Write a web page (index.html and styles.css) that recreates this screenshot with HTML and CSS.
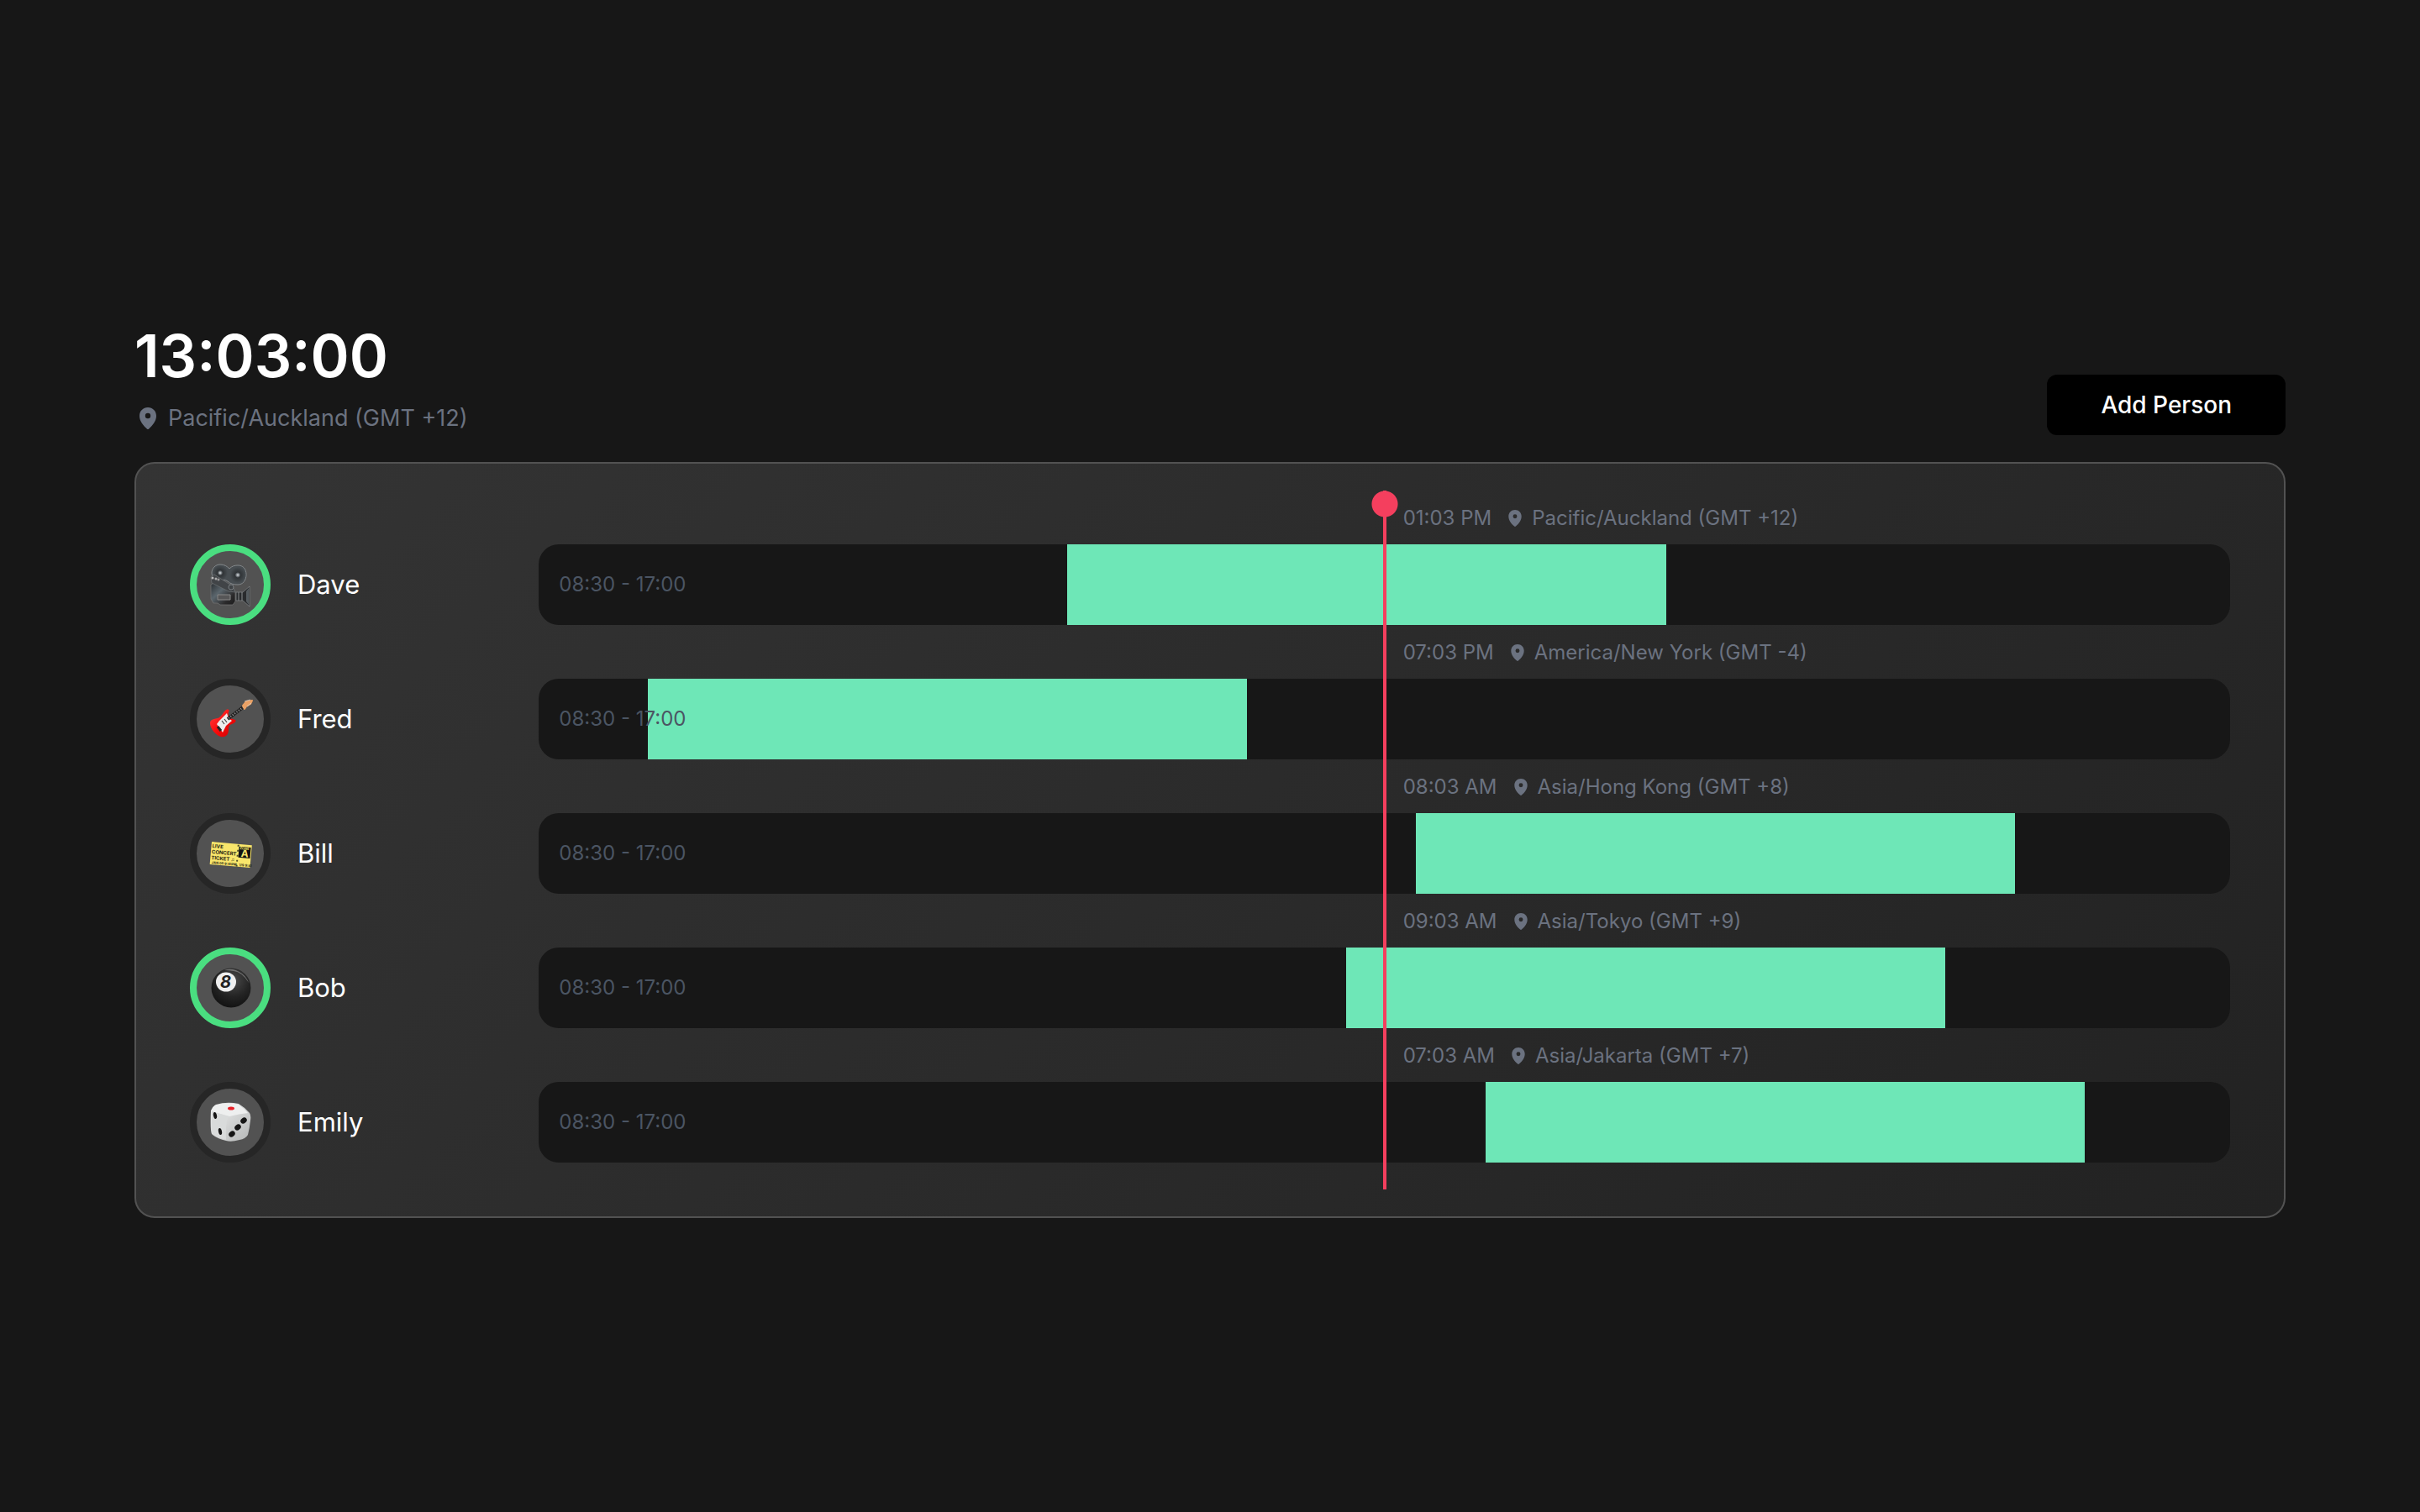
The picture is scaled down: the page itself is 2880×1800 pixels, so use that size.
FILE: index.html
```html
<!DOCTYPE html>
<html lang="en">
<head>
<meta charset="utf-8">
<title>Team time zones</title>
<link rel="stylesheet" href="styles.css">
</head>
<body>
<svg class="defs" aria-hidden="true">
  <defs>
    <symbol id="pin" viewBox="0 0 20 26"><path fill-rule="evenodd" d="M10 0C4.300 0 0 4.400 0 10c0 7 5.400 12 8.800 15.500q1.200 1 2.400 0C14.600 22 20 17 20 10 20 4.400 15.700 0 10 0zm0 6.800a3.200 3.200 0 1 1 0 6.400 3.200 3.200 0 0 1 0-6.400z"/></symbol>
    <linearGradient id="cam" x1="0" y1="0" x2="1" y2="1"><stop offset="0" stop-color="#25292c"/><stop offset=".4" stop-color="#5b666d"/><stop offset=".75" stop-color="#2b2a2b"/><stop offset="1" stop-color="#1b1b1c"/></linearGradient>
    <radialGradient id="reel"><stop offset="0" stop-color="#dfe3e5"/><stop offset=".2" stop-color="#777d82"/><stop offset=".35" stop-color="#2f3336"/><stop offset="1" stop-color="#474d51"/></radialGradient>
    <radialGradient id="ball" cx=".55" cy=".3" r=".7"><stop offset="0" stop-color="#4a4a4a"/><stop offset=".6" stop-color="#242424"/><stop offset="1" stop-color="#131313"/></radialGradient>
    <linearGradient id="body" x1="0" y1="0" x2="1" y2="1"><stop offset="0" stop-color="#ff4444"/><stop offset=".5" stop-color="#f90d0d"/><stop offset="1" stop-color="#c80000"/></linearGradient>
    <linearGradient id="die" x1="0" y1="0" x2="1" y2="1"><stop offset="0" stop-color="#f1f2f2"/><stop offset="1" stop-color="#b4b6b6"/></linearGradient>
  </defs>
</svg>
<main class="page">
  <header class="header">
    <div>
      <h1 class="clock">13:03:00</h1>
      <p class="zone"><svg class="pin"><use href="#pin"/></svg>Pacific/Auckland (GMT +12)</p>
    </div>
    <button class="add" type="button">Add Person</button>
  </header>
  <section class="panel">
    <article class="row">
      <div class="person">
        <span class="avatar available"><svg class="emoji" viewBox="0 0 48 48">
          <path d="M1 24l7-4 20 9 2 3v12l-3 4H12l-3-2H4L1 41z" fill="url(#cam)" stroke="#777" stroke-width=".7"/>
          <path d="M12 0c5 0 8 2 11 5 3-3 6-4 10-4 6 0 10 4 10 11s-4 12-10 12c-5 0-9-1-12-4-3-2-6-2-9-1C6 18 2 15 2 10S6 0 12 0z" fill="#474d51" stroke="#83888b"/>
          <circle cx="12" cy="10" r="9" fill="url(#reel)"/><circle cx="33" cy="12.500" r="9.500" fill="url(#reel)"/>
          <path d="M1 15l4-3 22 14 3 7-8-1L2 22z" fill="#414447" stroke="#6e7376" stroke-width=".7"/>
          <circle cx="3" cy="16" r="1.500" fill="#bbb"/><circle cx="7" cy="17" r="1.500" fill="#aaa"/><circle cx="10" cy="18" r="1.500" fill="#999"/><circle cx="25" cy="27" r="3" fill="#3f4346" stroke="#7a7f82"/>
          <path d="M31 33h8l8-7v24l-8-7h-8z" fill="#292b2d" stroke="#84888b" stroke-width=".7"/><path d="M34 33v10M38 33v10" stroke="#8b8e90"/>
          <path d="M43 32v12l3 4V28z" fill="#555c60"/><path d="M9 36h15v6H9z" fill="#565657" stroke="#898989"/>
        </svg></span>
        <h2 class="name">Dave</h2>
      </div>
      <div class="day">
        <p class="local"><span>01:03 PM</span><svg class="pin small"><use href="#pin"/></svg>Pacific/Auckland (GMT +12)</p>
        <div class="track"><span class="hours" style="left:31.230%"></span><span class="range">08:30 - 17:00</span></div>
      </div>
    </article>
    <article class="row">
      <div class="person">
        <span class="avatar"><svg class="emoji" viewBox="0 0 48 48">
          <path d="M18 14c3-3 6-1 4 2-1 3 0 5 2 7l6 2c2 2-1 4-4 5-4 1-4 4-4 7 0 6-4 9-9 8C7 44 0 35 0 29c0-5 5-5 9-6s6-6 9-9z" fill="url(#body)"/>
          <path d="M20 17l-9 9-3 4 7 10 4-8 7-6-4-3z" fill="#ededed"/><path d="M9 33l4 5" stroke="#222" stroke-width="3"/>
          <path d="M14 26l3 4M17 24l3 4" stroke="#444" stroke-width="1.200"/>
          <path d="M21 24L43 7" stroke="#222" stroke-width="4"/><path d="M22 23L42 8" stroke="#a1a1a1" stroke-width="2" stroke-dasharray="1 2"/>
          <path d="M39 8l4-5 7-1-2 4-5 3-2 3z" fill="#eaa165" stroke="#eaa165" stroke-width="2" stroke-linejoin="round"/><path d="M41 3l7-2M44 9l5-4" stroke="#ddd" stroke-width=".7"/>
        </svg></span>
        <h2 class="name">Fred</h2>
      </div>
      <div class="day">
        <p class="local"><span>07:03 PM</span><svg class="pin small"><use href="#pin"/></svg>America/New York (GMT -4)</p>
        <div class="track"><span class="hours" style="left:6.450%"></span><span class="range">08:30 - 17:00</span></div>
      </div>
    </article>
    <article class="row">
      <div class="person">
        <span class="avatar"><svg class="emoji" viewBox="0 0 48 48">
          <g transform="translate(2 10) rotate(5)"><path d="M0 0h48v27H0z" fill="#f9e66b"/><path d="M33 3h14v13H33z" fill="#111"/><path d="M32 1v26" stroke="#55502a" stroke-width="2" stroke-dasharray="2 4"/>
          <g font-family="Inter, sans-serif" font-weight="700" fill="#252310"><text x="1" y="7" font-size="6">LIVE</text><text x="1" y="14" font-size="6">CONCERT</text><text x="1" y="21" font-size="6">TICKET ♫</text><text x="2" y="26" font-size="4">JAN 05 9:41PM</text><text x="35" y="26" font-size="4">1/9 9:41</text><text x="36" y="15" font-size="12" fill="#f9e66b">A</text><text x="34" y="6" font-size="4" fill="#f9e66b">ZONE</text></g></g>
        </svg></span>
        <h2 class="name">Bill</h2>
      </div>
      <div class="day">
        <p class="local"><span>08:03 AM</span><svg class="pin small"><use href="#pin"/></svg>Asia/Hong Kong (GMT +8)</p>
        <div class="track"><span class="hours" style="left:51.850%"></span><span class="range">08:30 - 17:00</span></div>
      </div>
    </article>
    <article class="row">
      <div class="person">
        <span class="avatar available"><svg class="emoji" viewBox="0 0 48 48">
          <circle cx="25" cy="24" r="23.500" fill="url(#ball)"/><path d="M17 3q10-4 21 4 6 5 8 11-8-13-18-14-6-1-11-1z" fill="#999" opacity=".6"/>
          <ellipse cx="19" cy="17" rx="12" ry="11.500" fill="#efefef"/><text x="12" y="24" font-family="Inter, sans-serif" font-size="20" font-weight="700" font-style="italic" fill="#222">8</text>
        </svg></span>
        <h2 class="name">Bob</h2>
      </div>
      <div class="day">
        <p class="local"><span>09:03 AM</span><svg class="pin small"><use href="#pin"/></svg>Asia/Tokyo (GMT +9)</p>
        <div class="track"><span class="hours" style="left:47.730%"></span><span class="range">08:30 - 17:00</span></div>
      </div>
    </article>
    <article class="row">
      <div class="person">
        <span class="avatar"><svg class="emoji" viewBox="0 0 48 48">
          <path d="M7 3Q20-1 34 2q7 4 13 11 2 3 1 9-1 9-3 17-3 5-10 6-10 3-16 1Q7 43 2 38 0 34 1 10q2-5 6-7z" fill="url(#die)"/>
          <path d="M6 4Q20 0 34 3q7 5 11 10-10 1-22 4Q11 15 3 10q0-4 3-6z" fill="#eeefef"/><path d="M23 17q-5 3-4 28Q8 42 2 37L2 11q10 3 21 6z" fill="#d9dbdb"/>
          <ellipse cx="25" cy="7.500" rx="4" ry="2" fill="#e72028"/>
          <g fill="#151515"><ellipse cx="6" cy="16" rx="2" ry="4" transform="rotate(-12 6 16)"/><ellipse cx="12" cy="35" rx="2" ry="4" transform="rotate(-12 12 35)"/><ellipse cx="40" cy="22" rx="4" ry="3.200" transform="rotate(-38 40 22)"/><ellipse cx="33" cy="30" rx="4" ry="3.200" transform="rotate(-38 33 30)"/><ellipse cx="26" cy="38" rx="4" ry="3.200" transform="rotate(-38 26 38)"/></g>
        </svg></span>
        <h2 class="name">Emily</h2>
      </div>
      <div class="day">
        <p class="local"><span>07:03 AM</span><svg class="pin small"><use href="#pin"/></svg>Asia/Jakarta (GMT +7)</p>
        <div class="track"><span class="hours" style="left:55.980%"></span><span class="range">08:30 - 17:00</span></div>
      </div>
    </article>
    <div class="overlay"><div class="needle"></div></div>
  </section>
</main>
</body>
</html>
```
FILE: styles.css
```css
* { box-sizing: border-box; }
body { margin: 0; background: #171717; color: #fff; font-family: Inter, "Liberation Sans", sans-serif; }
h1, h2, p { margin: 0; font-weight: 400; }
.defs { position: absolute; width: 0; height: 0; }
.page { min-height: 100vh; padding: 66px 160px 32px; display: flex; flex-direction: column; justify-content: center; gap: 32px; }
.header { display: flex; justify-content: space-between; align-items: flex-end; }
.clock { font-size: 70px; line-height: 80px; font-weight: 600; }
.zone { display: flex; align-items: center; gap: 14px; margin-top: 14px; padding-left: 6px; font-size: 27px; line-height: 40px; color: #6b7280; }
.pin { width: 20px; height: 26px; fill: currentColor; flex: none; }
.pin.small { width: 16px; height: 20px; }
.add { padding: 16px 64px; border: 0; border-radius: 12px; background: #000; color: #fff; font: 500 28px/40px Inter, sans-serif; }
.panel { position: relative; display: grid; gap: 64px; padding: 96px 64px 64px; border: 2px solid #525252; border-radius: 24px; background: linear-gradient(135deg, #343434, #222); }
.row, .overlay { display: grid; grid-template-columns: repeat(6, 1fr); column-gap: 64px; }
.person { display: flex; align-items: center; gap: 32px; }
.avatar { display: grid; place-items: center; width: 96px; height: 96px; border: 8px solid #262626; border-radius: 50%; background: #525252; }
.avatar.available { border-color: #4ade80; }
.emoji { width: 48px; height: 48px; overflow: visible; }
.name { font-size: 31px; line-height: 50px; }
.day { position: relative; grid-column: span 5; }
.local { position: absolute; left: 50%; bottom: 100%; display: flex; align-items: center; gap: 12px; padding: 0 0 15px 22px; font-size: 24px; line-height: 32px; color: #6b7280; white-space: nowrap; }
.local span { margin-right: 8px; }
.track { position: relative; display: flex; align-items: center; height: 96px; padding: 0 24px; border-radius: 24px; background: #171717; overflow: hidden; }
.hours { position: absolute; top: 0; bottom: 0; width: 35.416%; background: #6ee7b7; }
.range { position: relative; font-size: 24px; line-height: 32px; color: #4b5563; }
.overlay { position: absolute; top: 32px; bottom: 32px; left: 64px; right: 64px; pointer-events: none; }
.needle { grid-column: 2 / span 5; justify-self: center; width: 32px; background: radial-gradient(circle at 16px 16px, #f43f5e 15px, transparent 16px) 0 0 / 32px 32px no-repeat, linear-gradient(#f43f5e, #f43f5e) center / 4px 100% no-repeat; }
```
